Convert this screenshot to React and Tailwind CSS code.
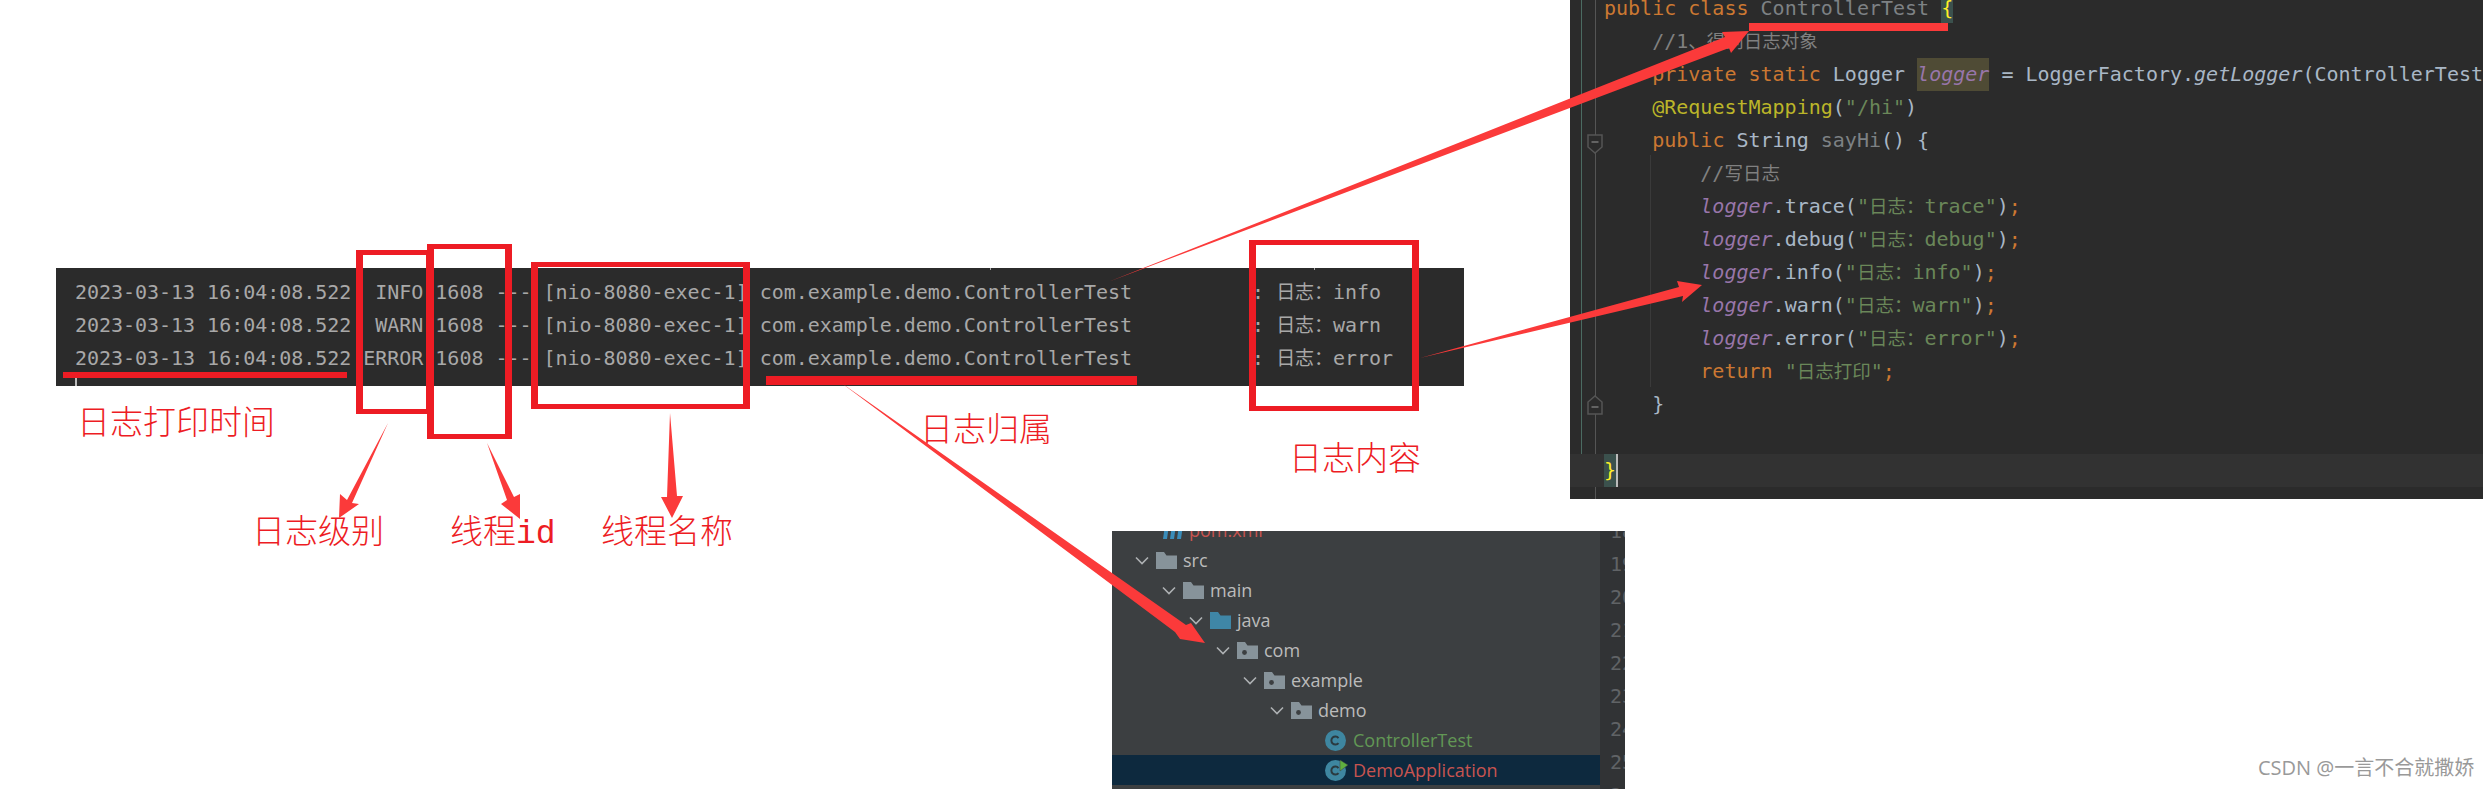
const mono = "font-['DejaVu_Sans_Mono','Noto_Sans_CJK_SC',monospace]";

const logPrefix = " 1608 --- [nio-8080-exec-1] com.example.demo.ControllerTest          : ";
const logLines = [
  { level: "  INFO", msg: "info" },
  { level: "  WARN", msg: "warn" },
  { level: " ERROR", msg: "error" },
];

const redBoxes = [
  "left-[356px] top-[250px] w-[77px] h-[164px]",
  "left-[427px] top-[244px] w-[85px] h-[195px]",
  "left-[531px] top-[262px] w-[219px] h-[147px]",
  "left-[1249px] top-[240px] w-[170px] h-[171px]",
];

const labels = [
  { text: "日志打印时间", pos: "left-[77px] top-[410px]" },
  { text: "日志级别", pos: "left-[252px] top-[519px]" },
  { text: "线程id", pos: "left-[450px] top-[519px]" },
  { text: "线程名称", pos: "left-[601px] top-[519px]" },
  { text: "日志归属", pos: "left-[920px] top-[417px]" },
  { text: "日志内容", pos: "left-[1289px] top-[446px]" },
];

const arrows = [
  "1108,282 1725,37 1722,32 1749,31 1731,53 1729,48",
  "1420,358 1679,287 1677,281 1702,285 1682,302 1683,296",
  "840,382 1186,625 1191,623 1205,643 1180,639 1175,632",
  "388,423 347,500 340,494 339,518 359,504 352,503",
  "487,443 514,497 520,494 520,519 501,504 507,500",
  "670,413 667,497 661,497 672,518 683,496 677,496",
];

const Zh = ({ children }) => <span className="text-[18.5px]">{children}</span>;
const Kw = ({ children }) => <span className="text-[#cc7832]">{children}</span>;
const Type = ({ children }) => <span className="text-[#a9b7c6]">{children}</span>;
const Str = ({ children }) => <span className="text-[#6a8759]">{children}</span>;
const Dim = ({ children }) => <span className="text-[#7d8184]">{children}</span>;
const Cmt = ({ children }) => <span className="text-[#808080]">{children}</span>;
const Log = ({ children }) => <span className="text-[#9876aa] italic">{children}</span>;

function LogCall({ method, msg }) {
  return (
    <>
      {"        "}
      <Log>logger</Log>
      <Type>.{method}(</Type>
      <Str>"<Zh>日志：</Zh>{msg}"</Str>
      <Type>)</Type>
      <Kw>;</Kw>
    </>
  );
}

const codeRows = [
  <>
    <Kw>public class </Kw>
    <Dim>ControllerTest </Dim>
    <span className="inline-block h-[31px] align-top bg-[#3b514d] text-[#ffef28]">{"{"}</span>
  </>,
  <>
    {"    "}
    <Cmt>//1<Zh>、得到日志对象</Zh></Cmt>
  </>,
  <>
    {"    "}
    <Kw>private static </Kw>
    <Type>Logger </Type>
    <span className="inline-block h-[33px] align-top bg-[#4f4b35]">
      <Log>logger</Log>
    </span>
    <Type> = LoggerFactory.</Type>
    <span className="text-[#a9b7c6] italic">getLogger</span>
    <Type>(ControllerTest</Type>
  </>,
  <>
    {"    "}
    <span className="text-[#bbb529]">@RequestMapping</span>
    <Type>(</Type>
    <Str>"/hi"</Str>
    <Type>)</Type>
  </>,
  <>
    {"    "}
    <Kw>public </Kw>
    <Type>String </Type>
    <Dim>sayHi</Dim>
    <Type>() {"{"}</Type>
  </>,
  <>
    {"        "}
    <Cmt>//<Zh>写日志</Zh></Cmt>
  </>,
  <LogCall method="trace" msg="trace" />,
  <LogCall method="debug" msg="debug" />,
  <LogCall method="info" msg="info" />,
  <LogCall method="warn" msg="warn" />,
  <LogCall method="error" msg="error" />,
  <>
    {"        "}
    <Kw>return </Kw>
    <Str>"<Zh>日志打印</Zh>"</Str>
    <Kw>;</Kw>
  </>,
  <>
    {"    "}
    <Type>{"}"}</Type>
  </>,
  <> </>,
];

function Chevron() {
  return (
    <svg width="14" height="9" viewBox="0 0 14 9" fill="none" className="shrink-0">
      <path d="M1 1.5 L7 7.5 L13 1.5" stroke="#aeb1b3" strokeWidth="1.6" />
    </svg>
  );
}

function Folder({ color = "#87939a", dot = false }) {
  return (
    <svg width="21" height="17" viewBox="0 0 21 17" className="shrink-0">
      <path d="M0 0 H8 L10.5 3.5 H21 V17 H0 Z" fill={color} />
      {dot && <circle cx="7.5" cy="10.5" r="2.4" fill="#3c3f41" />}
    </svg>
  );
}

function ClassIcon({ run = false }) {
  return (
    <svg width="24" height="24" viewBox="0 0 24 24" className="shrink-0">
      <circle cx="10.5" cy="12.5" r="10.5" fill="#3e86a0" />
      <path d="M13.5 10 A4 4 0 1 0 13.5 15" fill="none" stroke="#2b3a40" strokeWidth="2" />
      {run && <path d="M15 2 L23 7 L15 13 Z" fill="#5fb03f" stroke="#3c3f41" strokeWidth="0.5" />}
    </svg>
  );
}

function PomIcon() {
  return (
    <svg width="21" height="17" viewBox="0 0 21 17" className="shrink-0">
      <path d="M3 3 H7 L5 17 H1 Z M10 3 H14 L12 17 H8 Z M17 3 H21 L19 17 H15 Z" fill="#3a8dba" />
    </svg>
  );
}

const treeRows = [
  { name: "pom.xml", pad: "pl-[50px]", color: "text-[#c75450]", icon: <PomIcon /> },
  { name: "src", pad: "pl-[23px]", arrow: true, icon: <Folder /> },
  { name: "main", pad: "pl-[50px]", arrow: true, icon: <Folder /> },
  { name: "java", pad: "pl-[77px]", arrow: true, icon: <Folder color="#3f86a6" /> },
  { name: "com", pad: "pl-[104px]", arrow: true, icon: <Folder dot /> },
  { name: "example", pad: "pl-[131px]", arrow: true, icon: <Folder dot /> },
  { name: "demo", pad: "pl-[158px]", arrow: true, icon: <Folder dot /> },
  { name: "ControllerTest", pad: "pl-[213px]", color: "text-[#629755]", icon: <ClassIcon />, gap: "gap-[4px]" },
  { name: "DemoApplication", pad: "pl-[213px]", color: "text-[#c75450]", icon: <ClassIcon run />, selected: true, gap: "gap-[4px]" },
];

function FoldMark({ pos, up }) {
  return (
    <svg width="16" height="20" viewBox="0 0 16 20" className={`absolute ${pos}`}>
      <path
        d={up ? "M1 19 V7 L8 1 L15 7 V19 Z" : "M1 1 V13 L8 19 L15 13 V1 Z"}
        fill="#2b2b2b"
        stroke="#555555"
        strokeWidth="1.5"
      />
      <path d={up ? "M4.5 12 H11.5" : "M4.5 8 H11.5"} stroke="#777777" strokeWidth="1.5" />
    </svg>
  );
}

export default function App() {
  return (
    <div className="relative w-[2487px] h-[789px] overflow-hidden bg-white">

      {/* LOG OUTPUT */}
      <div className={`absolute left-[56px] top-[268px] w-[1408px] h-[118px] bg-[#2b2b2b] pt-[8px] pl-[19px] text-[20px] tracking-[-0.03px] text-[#a8a8a8] ${mono}`}>
        {logLines.map((line) => (
          <div key={line.msg} className="h-[33px] leading-[33px] whitespace-pre">
            2023-03-13 16:04:08.522{line.level}{logPrefix}
            <span className="text-[19px]">日志：</span>{line.msg}
          </div>
        ))}
        <div className="absolute left-[19px] bottom-0 w-[2px] h-[8px] bg-[#bbbbbb]" />
        <div className="absolute left-[934px] top-0 w-[1px] h-[2px] bg-[#a8a8a8]" />
        <div className="absolute left-[1258px] top-0 w-[1px] h-[2px] bg-[#a8a8a8]" />
      </div>

      {/* CODE EDITOR */}
      <div className={`absolute left-[1570px] top-0 w-[913px] h-[499px] overflow-hidden bg-[#2b2b2b] text-[20px] text-[#a9b7c6] ${mono}`}>
        <div className="absolute left-[11px] top-0 w-[1px] h-[487px] bg-[#4b6b62]" />
        <div className="absolute left-[25px] top-0 w-[1px] h-[499px] bg-[#555555]" />
        <div className="absolute left-[80px] top-[155px] w-[1px] h-[232px] bg-[#3a3a3a]" />
        <FoldMark pos="left-[17px] top-[134px]" />
        <FoldMark pos="left-[17px] top-[395px]" up />
        <div className="relative -mt-[8px]">
          {codeRows.map((row, i) => (
            <div key={i} className="h-[33px] leading-[33px] whitespace-pre pl-[34px]">{row}</div>
          ))}
          <div className="h-[33px] leading-[33px] whitespace-pre pl-[34px] bg-[#323232]">
            <span className="inline-block h-[33px] bg-[#3b514d] text-[#ffef28] border-r-2 border-[#bbbbbb]">{"}"}</span>
          </div>
        </div>
      </div>

      {/* PROJECT TREE */}
      <div className="absolute left-[1112px] top-[531px] w-[513px] h-[258px] overflow-hidden flex bg-[#3c3f41]">
        <div className="w-[488px] -mt-[16px] text-[18px] text-[#bbbbbb] font-['Open_Sans',sans-serif]">
          {treeRows.map((row) => (
            <div
              key={row.name}
              className={`h-[30px] flex items-center ${row.pad} ${row.selected ? "bg-[#0d293e]" : ""}`}
            >
              {row.arrow && <div className="mr-[7px]"><Chevron /></div>}
              <div className={`flex items-center ${row.gap || "gap-[6px]"}`}>
                {row.icon}
                <span className={`leading-[30px] ${row.color || ""}`}>{row.name}</span>
              </div>
            </div>
          ))}
        </div>
        <div className={`w-[25px] -mt-[16px] bg-[#313335] pl-[10px] text-[20px] text-[#606366] overflow-hidden ${mono}`}>
          {["18", "19", "20", "21", "22", "23", "24", "25", "26"].map((n) => (
            <div key={n} className="h-[33px] leading-[33px]">{n}</div>
          ))}
        </div>
      </div>

      {/* ANNOTATIONS */}
      {labels.map((label) => (
        <div
          key={label.text}
          className={`absolute ${label.pos} text-[33px] leading-[32px] font-light text-[#ed1c24] whitespace-pre font-['Liberation_Mono','Noto_Sans_CJK_SC',monospace]`}
        >
          {label.text}
        </div>
      ))}

      {redBoxes.map((pos) => (
        <div key={pos} className={`absolute ${pos} border-x-[7px] border-y-[5px] border-[#ed1c24]`} />
      ))}

      <div className="absolute left-[63px] top-[372px] w-[284px] h-[6px] bg-[#ed1c24]" />
      <div className="absolute left-[766px] top-[376px] w-[371px] h-[9px] bg-[#ed1c24]" />
      <div className="absolute left-[1749px] top-[23px] w-[199px] h-[8px] bg-[#fb3a3a]" />

      <svg width="2487" height="789" viewBox="0 0 2487 789" className="absolute left-0 top-0 pointer-events-none">
        {arrows.map((points) => (
          <polygon key={points} points={points} fill="#fb3a3a" />
        ))}
      </svg>

      <div className="absolute left-[2258px] top-[756px] text-[20px] leading-[24px] text-[#999999] whitespace-pre font-['Open_Sans','Noto_Sans_CJK_SC',sans-serif]">
        CSDN @一言不合就撒娇
      </div>
    </div>
  );
}
